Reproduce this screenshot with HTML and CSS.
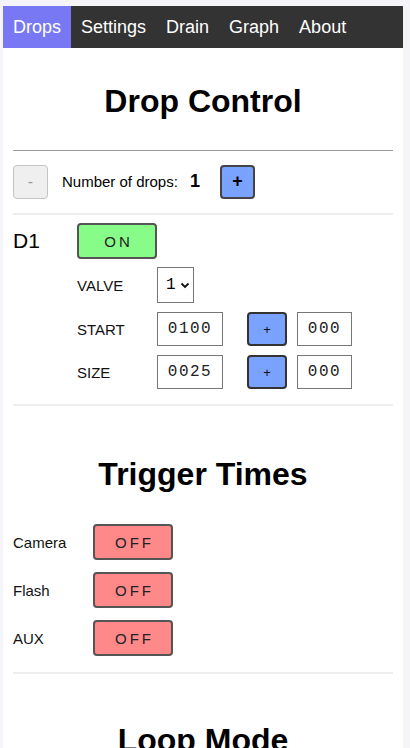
FILE: index.html
```
<!DOCTYPE html>
<html>
<head>
<meta charset="utf-8">
<link rel="stylesheet" href="styles.css">
</head>
<body>
<div class="page">
  <nav class="nav">
    <a class="tab active">Drops</a>
    <a class="tab">Settings</a>
    <a class="tab">Drain</a>
    <a class="tab">Graph</a>
    <a class="tab">About</a>
  </nav>
  <main class="content">
    <h1 class="title">Drop Control</h1>
    <hr class="rule">
    <div class="count-row">
      <button class="sq-btn disabled">-</button>
      <span class="count-label">Number of drops:</span>
      <span class="count-val">1</span>
      <button class="sq-btn blue">+</button>
    </div>
    <div class="sep"></div>
    <div class="drop">
      <div class="drop-name">D1</div>
      <div class="drop-body">
        <button class="toggle on">ON</button>
        <div class="field-row">
          <span class="flabel">VALVE</span>
          <div class="select">1<svg width="10" height="7" viewBox="0 0 10 7"><path d="M1.5 1.5 L5 5 L8.5 1.5" fill="none" stroke="#111" stroke-width="1.8"/></svg></div>
        </div>
        <div class="field-row">
          <span class="flabel">START</span>
          <div class="num">0100</div>
          <button class="small-btn">+</button>
          <div class="num short">000</div>
        </div>
        <div class="field-row">
          <span class="flabel">SIZE</span>
          <div class="num">0025</div>
          <button class="small-btn">+</button>
          <div class="num short">000</div>
        </div>
      </div>
    </div>
    <div class="sep"></div>
    <h1 class="title title2">Trigger Times</h1>
    <div class="trig-list">
      <div class="trig"><span class="tlabel">Camera</span><button class="toggle off">OFF</button></div>
      <div class="trig"><span class="tlabel">Flash</span><button class="toggle off">OFF</button></div>
      <div class="trig"><span class="tlabel">AUX</span><button class="toggle off">OFF</button></div>
    </div>
    <div class="sep"></div>
    <h1 class="title title3">Loop Mode</h1>
  </main>
</div>
</body>
</html>
```
FILE: styles.css
```
html, body { margin: 0; padding: 0; }
body {
  background: #f5f5f9;
  font-family: "Liberation Sans", Arial, sans-serif;
  color: #000;
  overflow: hidden;
  height: 748px;
}
.page {
  margin: 6px 7px 0 3px;
  background: #fff;
  height: 742px;
  overflow: hidden;
}
.nav {
  display: flex;
  background: #333333;
  height: 42px;
  align-items: stretch;
}
.tab {
  color: #fff;
  font-size: 18px;
  padding: 0 10px;
  display: flex;
  align-items: center;
}
.tab.active { background: #7878f4; }
.content { padding: 0 10px; }
.title {
  font-size: 32px;
  font-weight: bold;
  text-align: center;
  margin: 0;
  padding-top: 35px;
  height: 67px;
  line-height: 36px;
}
.rule {
  border: 0;
  border-top: 1px solid #999;
  margin: 0;
}
.count-row {
  display: flex;
  align-items: center;
  height: 61px;
  padding-bottom: 1px;
}
.sq-btn {
  width: 35px;
  height: 34px;
  border-radius: 4px;
  font-family: "Liberation Sans", Arial, sans-serif;
  font-size: 16px;
  padding: 0;
}
.sq-btn.disabled {
  background: #efefef;
  border: 1px solid #c4c4c4;
  color: #999;
}
.sq-btn.blue {
  background: #7aa2ff;
  border: 2px solid #444;
  color: #000;
  font-weight: bold;
  font-size: 18px;
  margin-left: 13px;
}
.count-label { font-size: 15px; margin-left: 14px; }
.count-val { font-size: 18px; font-weight: bold; margin-left: 12px; width: 17px; }
.sep { height: 2px; background: #eeeeee; }
.drop {
  display: flex;
  padding: 8px 0 15px;
}
.drop-name {
  width: 64px;
  font-size: 21px;
  padding-top: 6px;
}
.drop-body { display: flex; flex-direction: column; }
.toggle {
  width: 80px;
  height: 36px;
  border: 2px solid #555;
  border-radius: 4px;
  font-family: "Liberation Sans", Arial, sans-serif;
  font-size: 15px;
  letter-spacing: 3px;
  padding: 0 0 0 3px;
  color: #222;
}
.toggle.on { background: #88fc88; }
.toggle.off { background: #ff8888; }
.drop-body .toggle { margin-bottom: 8px; }
.field-row {
  display: flex;
  align-items: center;
  margin-bottom: 9px;
}
.field-row:last-child { margin-bottom: 0; }
.flabel { width: 80px; font-size: 15px; color: #111; }
.select {
  width: 37px;
  height: 36px;
  border: 1px solid #767676;
  box-sizing: border-box;
  display: flex;
  align-items: center;
  padding-left: 8px;
  gap: 4px;
  font-family: "Liberation Mono", monospace;
  font-size: 16px;
}
.num {
  width: 66px;
  height: 34px;
  border: 1px solid #767676;
  box-sizing: border-box;
  display: flex;
  align-items: center;
  justify-content: center;
  font-family: "Liberation Mono", monospace;
  font-size: 16px;
  letter-spacing: 1.5px;
  color: #222;
}
.num.short { width: 55px; }
.small-btn {
  width: 40px;
  height: 34px;
  margin: 0 10px 0 24px;
  background: #7aa2ff;
  border: 2px solid #333;
  border-radius: 4px;
  font-size: 13px;
  padding: 0;
  color: #111;
}
.title2 { padding-top: 50px; height: 60px; }
.trig-list { padding: 8px 0 16px; display: flex; flex-direction: column; gap: 12px; }
.trig { display: flex; align-items: center; }
.tlabel { width: 80px; font-size: 15px; color: #111; }
.title3 { padding-top: 48px; }
```
